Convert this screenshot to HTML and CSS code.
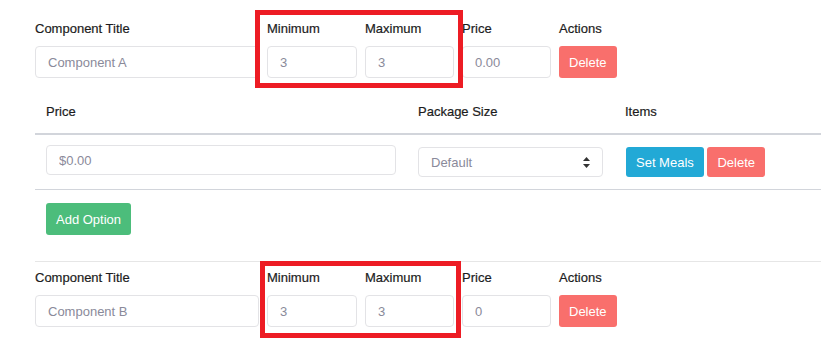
FILE: index.html
```html
<!DOCTYPE html>
<html lang="en">
<head>
    <meta charset="UTF-8">
    <meta name="viewport" content="width=device-width, initial-scale=1.0">
    <title>Components</title>
    <link rel="stylesheet" href="styles.css">
</head>
<body>
    <div class="page">
        <!-- Component A -->
        <section class="component first">
            <div class="fields">
                <div class="field">
                    <label>Component Title</label>
                    <input class="form-input" type="text" value="Component A">
                </div>
                <div class="field">
                    <label>Minimum</label>
                    <input class="form-input" type="text" value="3">
                </div>
                <div class="field">
                    <label>Maximum</label>
                    <input class="form-input" type="text" value="3">
                </div>
                <div class="field">
                    <label>Price</label>
                    <input class="form-input" type="text" value="0.00">
                </div>
                <div class="field">
                    <label>Actions</label>
                    <button class="btn btn-red">Delete</button>
                </div>
            </div>

            <table class="options">
                <thead>
                    <tr>
                        <th class="col-price">Price</th>
                        <th class="col-size">Package Size</th>
                        <th>Items</th>
                    </tr>
                </thead>
                <tbody>
                    <tr>
                        <td><input class="form-input small" type="text" value="$0.00"></td>
                        <td>
                            <div class="select-wrap">
                                <select class="form-select">
                                    <option>Default</option>
                                </select>
                                <svg class="select-arrow" width="7" height="11" viewBox="0 0 7 11">
                                    <path d="M3.5 0 L7 4 L0 4 Z M0 7 L7 7 L3.5 11 Z" fill="#333"/>
                                </svg>
                            </div>
                        </td>
                        <td class="items">
                            <button class="btn btn-blue small">Set Meals</button>
                            <button class="btn btn-red small">Delete</button>
                        </td>
                    </tr>
                </tbody>
            </table>

            <button class="btn btn-green add-option">Add Option</button>

            <div class="highlight highlight-a"></div>
        </section>

        <!-- Component B -->
        <section class="component">
            <div class="fields">
                <div class="field">
                    <label>Component Title</label>
                    <input class="form-input" type="text" value="Component B">
                </div>
                <div class="field">
                    <label>Minimum</label>
                    <input class="form-input" type="text" value="3">
                </div>
                <div class="field">
                    <label>Maximum</label>
                    <input class="form-input" type="text" value="3">
                </div>
                <div class="field">
                    <label>Price</label>
                    <input class="form-input" type="text" value="0">
                </div>
                <div class="field">
                    <label>Actions</label>
                    <button class="btn btn-red">Delete</button>
                </div>
            </div>

            <div class="highlight highlight-b"></div>
        </section>
    </div>
</body>
</html>
```

FILE: styles.css
```css
body {
    margin: 0;
    font-family: 'Liberation Sans', Arial, sans-serif;
    font-size: 13px;
    color: #1c1c1c;
    background-color: #fff;
}

.page {
    padding-left: 35px;
}

/* Component blocks */
.component {
    position: relative;
    padding: 6px 0 26px;
    border-top: 1px solid #e6e6e6;
}

.component.first {
    border-top: none;
    padding-top: 19px;
}

.fields {
    display: grid;
    grid-template-columns: 224px 90px 89px 89px auto;
    column-gap: 8px;
    align-items: start;
}

.field label {
    display: block;
    line-height: 20px;
    margin-bottom: 7px;
    -webkit-text-stroke: 0.2px #1c1c1c;
}

/* Inputs */
.form-input {
    display: block;
    box-sizing: border-box;
    width: 100%;
    height: 32px;
    padding: 0 12px;
    border: 1px solid #e3e3e6;
    border-radius: 4px;
    font-family: inherit;
    font-size: 13px;
    color: #8a8a9a;
    background-color: #fff;
    outline: none;
}

.form-input.small {
    height: 30px;
}

.select-wrap {
    position: relative;
    margin-top: 2px;
}

.form-select {
    display: block;
    box-sizing: border-box;
    width: 100%;
    height: 30px;
    padding: 0 12px;
    border: 1px solid #e3e3e6;
    border-radius: 4px;
    font-family: inherit;
    font-size: 13px;
    color: #8a8a9a;
    background-color: #fff;
    -webkit-appearance: none;
    appearance: none;
    outline: none;
}

.select-arrow {
    position: absolute;
    right: 13px;
    top: 10px;
    pointer-events: none;
}

/* Buttons */
.btn {
    box-sizing: border-box;
    height: 32px;
    padding: 0 10px;
    border: none;
    border-radius: 3px;
    font-family: inherit;
    font-size: 13px;
    color: #fff;
    cursor: pointer;
}

.btn.small {
    height: 30px;
    padding: 0 10px;
    margin-top: 2px;
}

.btn-red {
    background-color: #f96f6c;
}

.btn-blue {
    background-color: #22a9d6;
}

.btn-green {
    background-color: #4cbd7b;
}

.add-option {
    display: block;
    margin: 13px 0 0 11px;
}

/* Options table */
.options {
    width: 100%;
    margin-top: 14px;
    border-collapse: collapse;
}

.options th {
    text-align: left;
    font-weight: normal;
    line-height: 20px;
    padding: 10px 11px 11px;
    border-bottom: 2px solid #d2d5db;
    -webkit-text-stroke: 0.2px #1c1c1c;
}

.options td {
    vertical-align: top;
    padding: 10px 11px 12px;
    border-bottom: 1px solid #d2d5db;
}

.options .col-price {
    width: 350px;
}

.options .col-size {
    width: 185px;
}

.items .btn {
    vertical-align: top;
}

.items .btn:first-child {
    margin-left: 1px;
}

/* Red annotation boxes */
.highlight {
    position: absolute;
    box-sizing: border-box;
    border: 5px solid #ed1c24;
    pointer-events: none;
}

.highlight-a {
    left: 220px;
    top: 10px;
    width: 208px;
    height: 78px;
}

.highlight-b {
    left: 225px;
    top: -1px;
    width: 201px;
    height: 77px;
}
```
